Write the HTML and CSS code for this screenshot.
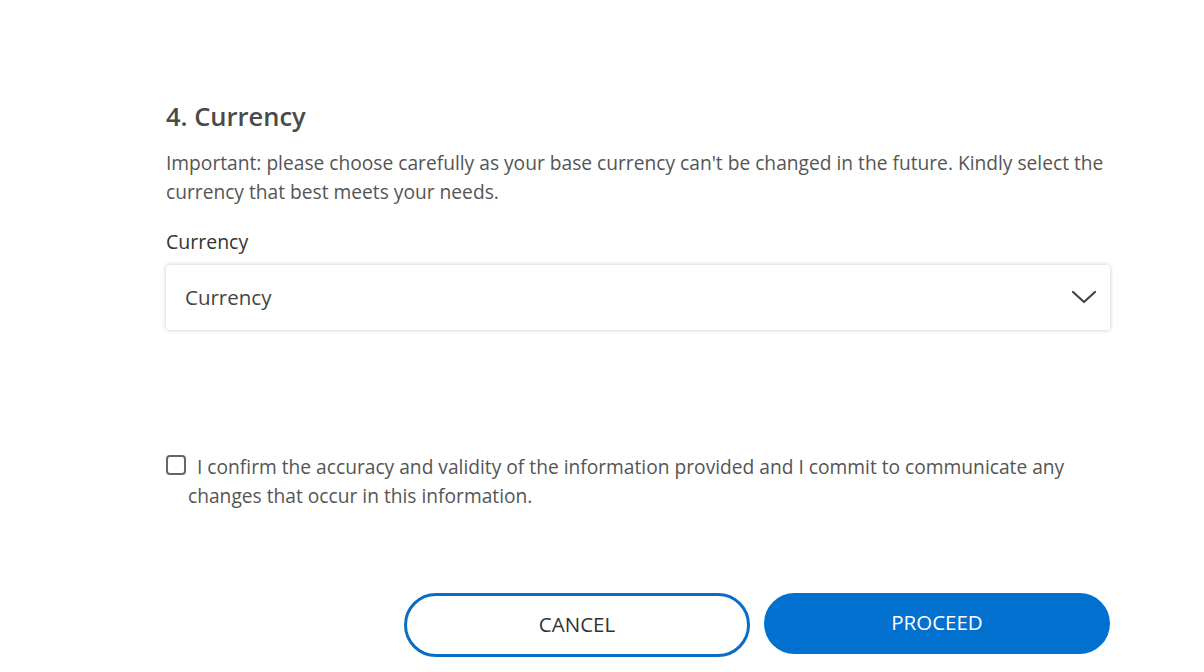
FILE: index.html
```html
<!DOCTYPE html>
<html lang="en">

<head>
    <meta charset="UTF-8">
    <title>Currency</title>
    <link rel="stylesheet" href="styles.css">
</head>

<body>
    <div class="page">
        <!-- currency section -->
        <section class="section">
            <h2 class="section-title">4. Currency</h2>
            <p class="section-note">Important: please choose carefully as your base currency can't be changed in the future. Kindly select the currency that best meets your needs.</p>

            <label class="field-label" for="currency">Currency</label>
            <div class="select-box" id="currency">
                <span class="select-value">Currency</span>
                <svg class="select-arrow" width="26" height="16" viewBox="0 0 26 16">
                    <path d="M2 3 L13 13 L24 3" fill="none" stroke="#444" stroke-width="2.2" stroke-linecap="round" stroke-linejoin="round"/>
                </svg>
            </div>
        </section>

        <!-- confirm -->
        <label class="confirm">
            <span class="checkbox"></span>I confirm the accuracy and validity of the information provided and I commit to communicate any changes that occur in this information.
        </label>

        <div class="actions">
            <button class="btn btn-outline">CANCEL</button>
            <button class="btn btn-primary">PROCEED</button>
        </div>
    </div>
</body>

</html>
```

FILE: styles.css
```css
body {
    font-family: "Open Sans", Arial, sans-serif;
    margin: 0;
    padding: 0;
    background-color: #fff;
    color: #555;
}

.page {
    width: 944px;
    margin-left: 166px;
    padding-top: 98px;
}

.section-title {
    font-size: 25.5px;
    font-weight: 600;
    color: #4a4a4a;
    margin: 0;
    line-height: 36px;
}

.section-note {
    font-size: 19.2px;
    line-height: 29px;
    color: #555;
    margin: 14px 0 0;
}

.field-label {
    display: block;
    font-size: 19.5px;
    font-weight: 500;
    color: #333;
    margin-top: 23px;
    line-height: 26px;
}

.select-box {
    margin-top: 10px;
    height: 65px;
    display: flex;
    align-items: center;
    justify-content: space-between;
    padding: 0 13px 2px 19px;
    background: #fff;
    border-radius: 3px;
    box-shadow: 0 0 4px rgba(0, 0, 0, 0.22);
    box-sizing: border-box;
}

.select-value {
    font-size: 20.5px;
    color: #444;
}

.confirm {
    display: block;
    margin-top: 122px;
    padding-left: 22px;
    text-indent: -22px;
    font-size: 19.2px;
    line-height: 29px;
    color: #555;
}

.checkbox {
    display: inline-block;
    width: 20px;
    height: 20px;
    box-sizing: border-box;
    border: 2px solid #666;
    border-radius: 4px;
    margin-right: 11px;
    vertical-align: -1px;
    text-indent: 0;
}

.actions {
    display: flex;
    justify-content: flex-end;
    align-items: flex-start;
    gap: 14px;
    margin-top: 83px;
}

.btn {
    font-family: "Open Sans", Arial, sans-serif;
    font-size: 20.5px;
    width: 346px;
    border-radius: 32px;
    cursor: pointer;
    box-sizing: border-box;
}

.btn-outline {
    height: 64px;
    background: #fff;
    color: #333;
    border: 3px solid #0a6cc4;
    padding: 0 0 2px;
}

.btn-primary {
    height: 61px;
    background: #0170ce;
    color: #fff;
    border: none;
    padding: 0 0 3px;
}
```
